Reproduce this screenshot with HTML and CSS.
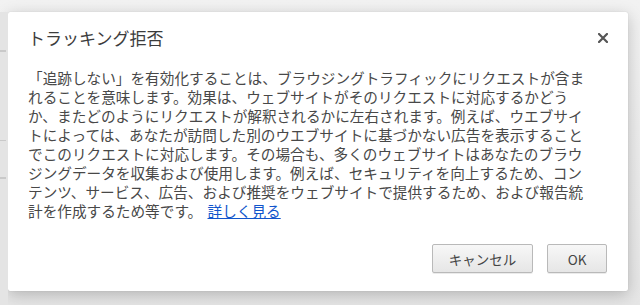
FILE: index.html
```html
<!DOCTYPE html>
<html lang="ja">
<head>
    <meta charset="UTF-8">
    <title>トラッキング拒否</title>
    <link rel="stylesheet" href="styles.css">
</head>
<body>
<div class="page">
    <div class="page__edge">
        <span class="mark mark--1"></span>
        <span class="mark mark--2"></span>
        <span class="mark mark--3"></span>
    </div>
    <div class="dialog">
        <div class="dialog__head">
            <h1 class="dialog__title">トラッキング拒否</h1>
            <button class="dialog__close" aria-label="閉じる">
                <svg width="10" height="10" viewBox="0 0 10 10">
                    <path d="M1 1 L9 9 M9 1 L1 9" stroke="#555" stroke-width="2.2" stroke-linecap="square"/>
                </svg>
            </button>
        </div>
        <p class="dialog__text">「追跡しない」を有効化することは、ブラウジングトラフィックにリクエストが含ま<br>れることを意味します。効果は、ウェブサイトがそのリクエストに対応するかどう<br>か、またどのようにリクエストが解釈されるかに左右されます。例えば、ウエブサイ<br>トによっては、あなたが訪問した別のウエブサイトに基づかない広告を表示すること<br>でこのリクエストに対応します。その場合も、多くのウェブサイトはあなたのブラウ<br>ジングデータを収集および使用します。例えば、セキュリティを向上するため、コン<br>テンツ、サービス、広告、および推奨をウェブサイトで提供するため、および報告統<br>計を作成するため等です。 <a href="#" class="dialog__link">詳しく見る</a></p>
        <div class="dialog__buttons">
            <button class="button">キャンセル</button>
            <button class="button button--ok">OK</button>
        </div>
    </div>
</div>
</body>
</html>
```

FILE: styles.css
```css
body {
  margin: 0;
  background: #ececec;
  font-family: "Noto Sans CJK JP", "Noto Sans", sans-serif;
  overflow: hidden;
}

.page {
  display: flex;
  height: 305px;
  padding: 12px 12px 0 0;
  box-sizing: border-box;
  background: linear-gradient(#f2f2f2, #e6e6e6);
}

.page__edge {
  width: 8px;
  position: relative;
  background: #e4e4e4;
}

.mark {
  position: absolute;
  left: 0;
  width: 6px;
  height: 2px;
  background: #c9c9c9;
}

.mark--1 { top: 38px; }
.mark--2 { top: 165px; }
.mark--3 { top: 128px; height: 1px; }

.dialog {
  width: 620px;
  height: 279px;
  background: #fff;
  border-radius: 2px;
  box-shadow: 0 4px 16px rgba(0, 0, 0, 0.22), 0 0 1px rgba(0, 0, 0, 0.2);
  padding: 0 21px 18px 20px;
  box-sizing: border-box;
  display: flex;
  flex-direction: column;
  color: #333;
}

.dialog__head {
  display: flex;
  justify-content: space-between;
  align-items: center;
  padding-top: 14px;
}

.dialog__title {
  margin: 0;
  font-size: 17px;
  font-weight: normal;
  line-height: 24px;
  color: #3c3c3c;
}

.dialog__close {
  border: 0;
  background: none;
  padding: 0;
  margin-right: -1px;
  width: 10px;
  height: 10px;
  display: flex;
}

.dialog__text {
  margin: 18px 0 0;
  font-size: 14.65px;
  line-height: 19px;
  white-space: nowrap;
  color: #484848;
}

.dialog__link {
  color: #15c;
  margin-left: 2px;
}

.dialog__buttons {
  margin-top: auto;
  display: flex;
  justify-content: flex-end;
  gap: 14px;
}

.button {
  height: 29px;
  min-width: 60px;
  padding: 0 12px;
  border: 1px solid #b9b9b9;
  border-radius: 2px;
  background: linear-gradient(#f7f7f7, #e6e6e6);
  box-shadow: 0 1px 0 rgba(0, 0, 0, 0.08);
  font-family: "Noto Sans CJK JP", sans-serif;
  font-size: 13.5px;
  color: #444;
}

.button:first-child {
  width: 101px;
}
```
